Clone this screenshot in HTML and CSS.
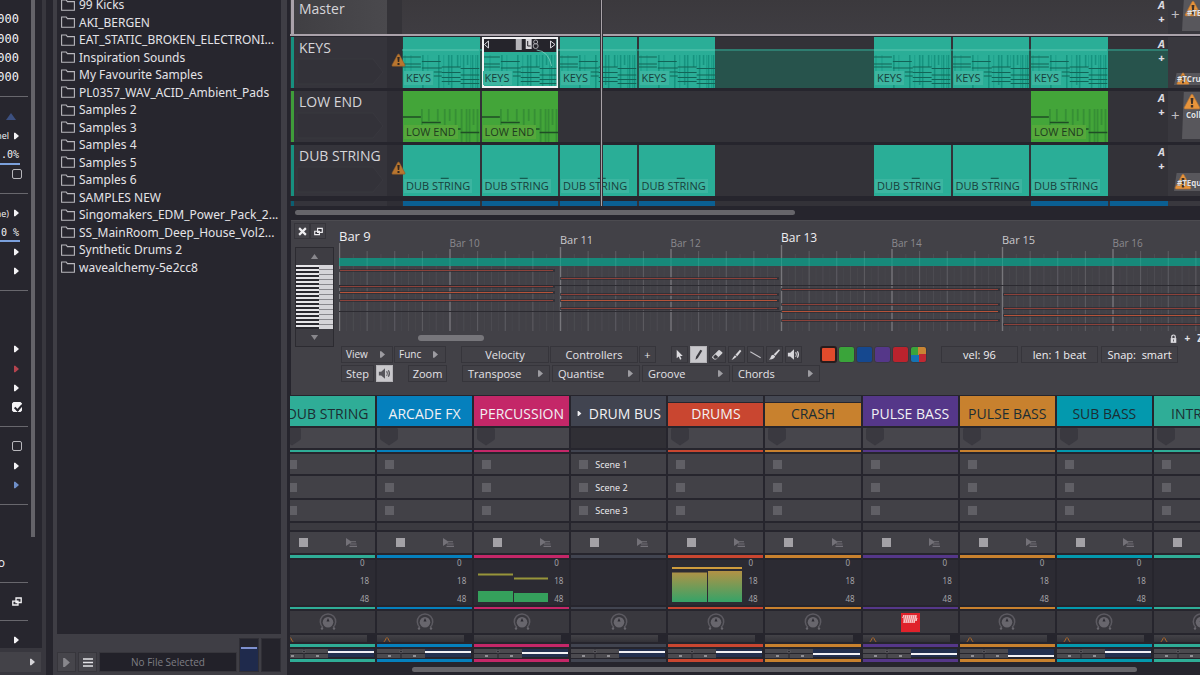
FILE: index.html
```html
<!DOCTYPE html>
<html lang="en">
<head>
<meta charset="utf-8">
<title>Studio session</title>
<link rel="stylesheet" href="styles.css">
</head>
<body>
<svg class="defs" aria-hidden="true">
  <symbol id="folder" viewBox="0 0 14 12"><path d="M.6 11.2V1h4.6l1.2 1.6h7v8.6z" fill="none" stroke="#b9b8bd" stroke-width="1.1"/></symbol>
  <symbol id="right" viewBox="0 0 6 8"><path d="M0 0h1.5L6 4 1.500 8H0z" fill="currentColor"/></symbol>
  <symbol id="up" viewBox="0 0 10 7"><path d="M5 0l5 7H0z" fill="currentColor"/></symbol>
  <symbol id="down" viewBox="0 0 10 7"><path d="M5 7l5-7H0z" fill="currentColor"/></symbol>
  <symbol id="windows" viewBox="0 0 10 9"><path d="M4 1h5.200v4.500H4zM.8 4.200H6V8H.8z" fill="#333239" stroke="currentColor" stroke-width="1.300"/></symbol>
  <symbol id="close" viewBox="0 0 8 8"><path d="M1 1l6 6M7 1L1 7" stroke="currentColor" stroke-width="1.900"/></symbol>
  <symbol id="menu" viewBox="0 0 10 9"><path d="M0 1h10M0 4.500h10M0 8h10" stroke="currentColor" stroke-width="1.600"/></symbol>
  <symbol id="warn" viewBox="0 0 15 14"><path d="M7.500 1Q8 .8 8.500 1.800L14 12q.4 1.200-.8 1.200H1.800Q.6 13.200 1 12L6.500 1.800Q7 .8 7.500 1z" fill="#b9762f" stroke="#8a5a2c" stroke-width=".6"/><path d="M6.300 4h2.400l-.5 5H6.800zM6.500 10h2v2h-2z" fill="#33271f"/></symbol>
  <symbol id="cursor" viewBox="0 0 16 16"><path d="M5 3v9l2.200-1.900L8.600 13.500l1.500-.7-1.400-3.200H11.500z" fill="#dddce0"/></symbol>
  <symbol id="pencil" viewBox="0 0 16 16"><path d="M4.800 13.500l.6-3L10 2.800l2 1.200-4.700 7.800z" fill="#3a393e"/></symbol>
  <symbol id="eraser" viewBox="0 0 16 16"><path d="M2.500 10L9 3.500q.7-.6 1.400 0l2.600 2q.7.6 0 1.300L6.500 13.200H4.400L2.300 11.400q-.5-.7.2-1.400z" fill="#d2d1d5"/><path d="M3.800 9.900L6 8l2.800 2.600-2 1.800H4.900L3.500 11z" fill="#3c3b40"/></symbol>
  <symbol id="knife" viewBox="0 0 16 16"><path d="M11.700 3l1.500 1.300L8.800 9.800 6.900 8.200zM6.300 8.800l1.900 1.600L4.600 13q-1.200.6-2 .2 1.600-.9 2-2.200z" fill="#d8d7db"/></symbol>
  <symbol id="line" viewBox="0 0 16 16"><path d="M2.500 5l11 6.500" stroke="#c4c3c8" stroke-width="1.100"/></symbol>
  <symbol id="brush" viewBox="0 0 16 16"><path d="M12.800 2.500l1 1L9 9.300 7.200 7.800zM6.700 8.200l2 1.700Q8 13.500 2 13.200q2-1 2.100-2.700.4-2.300 2.600-2.300z" fill="#d8d7db"/></symbol>
  <symbol id="speaker" viewBox="0 0 16 16"><path d="M2 6h2.500l4-3.500v11l-4-3.500H2z" fill="currentColor"/><path d="M10.300 5.500q1.600 2.500 0 5M12.200 4.500q2.200 3.500 0 7" fill="none" stroke="currentColor" stroke-width="1.200"/></symbol>
  <symbol id="lock" viewBox="0 0 8 10"><path d="M2 5V3a2 2 0 014 0v2" fill="none" stroke="#dddce0" stroke-width="1.400"/><path d="M.8 4.500h6.400V10H.8z" fill="#dddce0"/><path d="M3.500 6h1v2.500h-1z" fill="#55545a"/></symbol>
  <symbol id="queue" viewBox="0 0 11 9"><path d="M0 0l6 4-6 4zM5 3.200h5v1H5zM4 5.500h6.500v1H4zM3.500 7.800H11v1.200H3.500z" fill="#737178"/></symbol>
  <symbol id="knob" viewBox="0 0 18 18"><path d="M4 14.500A7.700 7.700 0 1114 14.500" fill="none" stroke="#5c5a61" stroke-width="1.500"/><circle cx="9" cy="9.200" r="5.300" fill="#68666d"/><path d="M9 5l1.500 3.500h-3z" fill="#2d2c33"/><circle cx="3" cy="15.500" r="1.200" fill="#68666d"/><circle cx="15" cy="15.500" r="1.200" fill="#68666d"/></symbol>
  <symbol id="shield" viewBox="0 0 18 18"><path d="M1.500 0h15q1.500 0 1.500 1.500V10q0 1.500-1.500 2.500L9 17.500 1.500 12.500Q0 11.500 0 10V1.500Q0 0 1.500 0z" fill="#3a3940"/></symbol>
  <symbol id="keysArt" viewBox="0 0 77 51" preserveAspectRatio="none">
    <path d="M0 13h77" stroke="#5cc5b1" stroke-width="1.200"/>
    <path d="M20 18v33M36 18v33M46 18v30M49 18v33M55 18v12M61 18v33M65 18v10M70 18v33M75 18v33" stroke="#16937f" stroke-width="1.600"/>
    <path d="M2 18v30M8 18v30M25 18v30M41 18v33M58 18v12M68 18v33M73 18v33" stroke="#1d9f8a" stroke-width="1"/>
    <path d="M0 20h18M0 27h18M0 30h18M19 24.500h19M19 31h20M39 30h19M58 31.500h19M31 35h8M31 39h8M39 35.500h19M39 40.500h19M39 44.500h19M58 38h19M58 42.500h19M58 46.500h19" stroke="#126457" stroke-width="1.200"/>
  </symbol>
  <symbol id="lowArt" viewBox="0 0 77 51" preserveAspectRatio="none">
    <path d="M19 18v30M26 18v12M35 18v12M42 18v30M47 18v12M53 18v16M59 18v33M64 18v33M67 18v33M71 18v16M75 18v33" stroke="#368f35" stroke-width="1.800"/>
    <path d="M0 26h18M19 31.500h19M54 38h4M58 41.500h19" stroke="#1f4d25" stroke-width="1.600"/>
  </symbol>
  <symbol id="dubArt" viewBox="0 0 77 51" preserveAspectRatio="none"><path d="M38 33.500h8" stroke="#155c51" stroke-width="1.600"/></symbol>
  <symbol id="selHead" viewBox="0 0 77 51" preserveAspectRatio="none">
    <path d="M2 2h73v13H2z" fill="#25242b"/><path d="M6.500 4L2.500 7.500l4 3.500zM69 4l4.500 3.500L69 11z" fill="none" stroke="#dcdbe0" stroke-width="1"/>
    <path d="M34 2h6v11h-6z" fill="#b5b4b9"/><path d="M44 2h6v10h-6z" fill="#d7d6da"/><path d="M46 4v5h3" stroke="#25242b" fill="none"/>
    <circle cx="54" cy="5" r="2" fill="none" stroke="#aaa9ae"/><circle cx="54" cy="9" r="2.500" fill="none" stroke="#aaa9ae"/>
    <path d="M55 13q12 1 15 16" fill="none" stroke="#7bd2c1" stroke-width=".8"/>
    <path d="M1 1h75v49H1z" fill="none" stroke="#f3f2f4" stroke-width="2"/>
  </symbol>
</svg>

<main class="app">
  <aside class="inspector" aria-label="Inspector">
    <div class="params">
      <hr><p class="num">000</p><p class="num">000</p><p class="num">000</p><p class="num">000</p><hr>
      <p class="wide blue"><svg class="tri"><use href="#up"/></svg></p>
      <p class="opt">nel<svg><use href="#right"/></svg></p>
      <p class="num value">.0%</p>
      <p class="wide"><input type="checkbox" aria-label="Enable"></p><hr>
      <p class="opt">ne)<svg><use href="#right"/></svg></p>
      <p class="num value">0 %</p>
      <p><svg><use href="#right"/></svg></p><p><svg><use href="#right"/></svg></p><hr><p></p><p></p>
      <p><svg><use href="#right"/></svg></p><p class="red"><svg><use href="#right"/></svg></p><p><svg><use href="#right"/></svg></p>
      <p class="wide"><input type="checkbox" aria-label="Loop" checked></p><hr>
      <p class="wide"><input type="checkbox" aria-label="Mute"></p>
      <p><svg><use href="#right"/></svg></p><p class="sky"><svg><use href="#right"/></svg></p><hr><p></p><p></p>
      <p class="tail">o</p><hr>
      <p class="wide"><svg class="win"><use href="#windows"/></svg></p><hr>
      <p><svg><use href="#right"/></svg></p>
    </div>
    <div class="vscroll"></div>
    <button class="expand" aria-label="Expand"><svg><use href="#right"/></svg></button>
  </aside>

  <section class="browser" aria-label="File browser">
    <ul class="files" id="files"></ul>
    <footer class="preview">
      <button aria-label="Play"><svg class="play"><use href="#right"/></svg></button>
      <button aria-label="Menu"><svg class="burger"><use href="#menu"/></svg></button>
      <output>No File Selected</output>
      <span class="level on"></span><span class="level"></span>
    </footer>
  </section>

  <section class="work">
    <div class="arranger" id="arranger"></div>
    <div class="hscroll top"><span></span></div>

    <section class="editor" aria-label="Note editor">
      <div class="side">
        <div class="pair"><button aria-label="Close"><svg><use href="#close"/></svg></button><button aria-label="Detach"><svg><use href="#windows"/></svg></button></div>
        <div class="keyboard">
          <button aria-label="Octave up"><svg><use href="#up"/></svg></button>
          <div class="keybed"></div>
          <button aria-label="Octave down"><svg><use href="#down"/></svg></button>
        </div>
      </div>
      <div class="stage">
        <div class="roll"><svg id="grid" viewBox="0 0 884 88" preserveAspectRatio="none"></svg><div class="bars" id="bars"></div></div>
        <div class="strip"><span class="handle"></span><span class="zoomers"><svg><use href="#lock"/></svg><b>+</b><b>Z</b></span></div>
        <div class="tools">
          <div class="group first"><button class="drop">View<svg><use href="#right"/></svg></button><button class="drop">Func<svg><use href="#right"/></svg></button></div>
          <div class="group mid"><button class="w88">Velocity</button><button class="w88">Controllers</button><button class="tiny">+</button></div>
          <div class="group icons">
            <button aria-label="Select"><svg><use href="#cursor"/></svg></button><button class="on" aria-label="Pencil"><svg><use href="#pencil"/></svg></button><button aria-label="Erase"><svg><use href="#eraser"/></svg></button><button aria-label="Knife"><svg><use href="#knife"/></svg></button><button aria-label="Line"><svg><use href="#line"/></svg></button><button aria-label="Brush"><svg><use href="#brush"/></svg></button><button aria-label="Audition"><svg><use href="#speaker"/></svg></button>
          </div>
          <div class="swatches"><button class="c1 on" aria-label="Orange"></button><button class="c2" aria-label="Green"></button><button class="c3" aria-label="Blue"></button><button class="c4" aria-label="Purple"></button><button class="c5" aria-label="Red"></button><button class="c6" aria-label="Multi"></button></div>
          <div class="group fields"><button>vel: 96</button><button>len: 1 beat</button><button>Snap:&nbsp; smart</button></div>
        </div>
        <div class="tools">
          <div class="group second"><button class="step">Step</button><button class="lit" aria-label="Sound"><svg><use href="#speaker"/></svg></button><button class="zoom">Zoom</button></div>
          <div class="group menus"><button class="drop">Transpose<svg><use href="#right"/></svg></button><button class="drop">Quantise<svg><use href="#right"/></svg></button><button class="drop">Groove<svg><use href="#right"/></svg></button><button class="drop">Chords<svg><use href="#right"/></svg></button></div>
        </div>
      </div>
    </section>

    <div class="mixer" id="mixer"></div>
    <div class="hscroll bottom"><span></span></div>
  </section>
</main>
<script src="app.js"></script>
</body>
</html>
```

FILE: styles.css
```css
* { box-sizing: border-box; }
body { margin: 0; background: #26252d; color: #e4e3e7; font: 13px/17px "Open Sans", "Noto Sans", sans-serif; overflow: hidden; }
button { font: inherit; color: inherit; margin: 0; padding: 0; border: 0; background: none; display: flex; align-items: center; justify-content: center; white-space: nowrap; }
p, ul { margin: 0; padding: 0; list-style: none; }
.defs { display: none; }
.app { display: grid; grid-template-columns: 46px 7px 234px 3px minmax(0, 1fr); height: 100vh; }

/* Inspector */
.inspector { grid-column: 1; display: grid; grid-template: minmax(0, 1fr) 20px / minmax(0, 1fr) 4px; row-gap: 4px; border-right: 4px solid #38373e; border-bottom: 3px solid #38373e; padding-right: 7px; overflow: hidden; background: linear-gradient(#27262e, #27262e) no-repeat 0 0 / 100% calc(100% - 24px), #38373e; }
.params { display: grid; grid-auto-rows: minmax(0, 1fr); margin: -10px 0 -2px; min-height: 0; }
.params p { display: flex; align-items: center; justify-content: flex-end; padding-right: 12px; gap: 5px; min-width: 0; white-space: nowrap; overflow: hidden; color: #f3f2f5; }
.params hr { width: 28px; height: 1px; margin: 0; border: 0; background: #68676d; align-self: center; }
.params svg { width: 5px; height: 8px; flex: none; }
.params .num { font: 12px/18px "DejaVu Sans Mono", monospace; }
.params .value { font-size: 10px; background: linear-gradient(#7ba0dc, #7ba0dc) no-repeat 0 100% / 20px 2px; }
.params .opt { font-size: 9px; }
.params .wide { padding-right: 9px; }
.params .tail { padding-right: 26px; font-size: 12px; }
.params .tri { width: 10px; height: 7px; margin-right: 6px; }
.params .win { width: 10px; height: 9px; }
.params .blue { color: #3c5080; }
.params .red { color: #b5444f; }
.params .sky { color: #6f8fc8; }
input[type="checkbox"] { appearance: none; width: 10px; height: 10px; margin: 0; border: 1px solid #b8b7bc; border-radius: 2px; flex: none; }
input[type="checkbox"]:checked { background: #f4f3f6; border-color: #f4f3f6; position: relative; }
input:checked::after { content: ""; position: absolute; left: 3px; top: 0; width: 3px; height: 6px; border: solid #27262e; border-width: 0 2px 2px 0; transform: rotate(42deg); }
.vscroll { background: #646369; margin-bottom: 111px; }
.expand { grid-column: 1 / 3; margin-right: -6px; background: #434248; justify-content: flex-end; padding-right: 6px; color: #d5d4d8; }
.expand svg { width: 5px; height: 8px; }

/* Browser */
.browser { grid-column: 3; display: flex; flex-direction: column; border: solid #3f3e45; border-width: 0 6px 3px 4px; background: #27262e; min-height: 0; }
.files { display: grid; grid-auto-rows: 1fr; height: 280px; margin-top: -4px; font-family: "Noto Sans", sans-serif; font-size: 12px; }
.files li { display: flex; align-items: center; gap: 4px; padding-left: 4px; white-space: nowrap; min-width: 0; }
.files svg { width: 14px; height: 12px; flex: none; }
.files a { color: inherit; text-decoration: none; }
.preview { margin-top: auto; display: grid; grid-template-columns: 19px 19px minmax(0, 1fr) 20px 20px; gap: 2px; align-items: end; height: 38px; padding-top: 4px; background: #3f3e45; }
.preview button, .preview output { height: 20px; border: 1px solid #37363c; background: #46454b; }
.preview output { background: #222129; color: #7f7e84; font-size: 10px; line-height: 18px; text-align: center; }
.play { width: 7px; height: 9px; color: #88878c; }
.burger { width: 10px; height: 9px; }
.level { height: 34px; background: #24232b; border: 1px solid #302f36; }
.level.on { background: linear-gradient(#7e90cf, #7e90cf) no-repeat 1px 8px / 16px 2px, linear-gradient(#24242e 8px, #1f2a4c 8px); }

/* Arranger */
.work { grid-column: 5; display: flex; flex-direction: column; min-width: 0; }
.arranger { position: relative; display: grid; grid-template-rows: 34px 51px 51px 51px 7px; row-gap: 3px; overflow: hidden; }
.track { display: grid; grid-template-columns: 97px 15px minmax(0, 1fr) 32px; min-width: 0; background: #333238; }
.track:first-child { box-shadow: 0 2px #aaa2aa; background: linear-gradient(#3b393d, #3f3d42); }
.track.peek { margin-top: 2px; }
.head { position: relative; border-left: 3px solid; margin-left: 1px; padding: 2px 5px; background: #35343b; font-size: 14px; color: #d6d5d9; overflow: hidden; }
.head svg { position: absolute; left: 2px; top: 21px; width: 88px; height: 27px; }
.head span { position: relative; }
.track:first-child .head { background: linear-gradient(90deg, #403f43, #4a494d); padding-top: 0; }
.gutter { background: #2f2e35; display: flex; align-items: center; }
.gutter svg { width: 15px; height: 14px; margin: 0 0 6px 4px; overflow: visible; flex: none; z-index: 1; }
.track:first-child .gutter { background: #343338; }
.lane { position: relative; overflow: hidden; min-width: 0; }
.lane.auto { background: linear-gradient(transparent 12px, #2e7d70 12px, #2e7d70 14px, #27534c 14px); }
.clips { display: grid; grid-template-columns: repeat(10, minmax(0, 1fr)); column-gap: 2px; margin: 0 -18px 0 1px; height: 100%; }
.clip { position: relative; display: flex; align-items: flex-end; padding: 0 0 3px 1px; background: #2aae97; }
.clip svg { position: absolute; inset: 0; width: 100%; height: 100%; }
.clip span { position: relative; padding: 0 2px; font-size: 11px; line-height: 14px; background: #3cb5a0; color: #173f3b; white-space: nowrap; }
.clip.low { background: #43a539; }
.clip.low span { background: #55a83b; color: #1f3c20; }
.clip.next { background: #0b5f92; }
.add { position: absolute; right: 0; top: 0; width: 13px; text-align: center; font-size: 11px; line-height: 14px; font-weight: bold; color: #dcdbe0; }
.add i, .add b { display: block; }
.track:first-child .add { margin-top: -2px; }
.fx { position: relative; background: #39383e; overflow: hidden; font-weight: bold; font-size: 8px; white-space: nowrap; }
.fx > i { position: absolute; left: 3px; font: 15px/16px "Noto Sans", sans-serif; color: #bdbcc1; }
.fx .plate { position: absolute; left: 14px; right: 0; background: #58575c; clip-path: polygon(10% 0, 100% 0, 100% 100%, 0 100%); }
.fx .plate.flat { left: 6px; }
.fx svg { position: absolute; width: 18px; height: 17px; filter: brightness(1.250); }
.fx span { position: absolute; line-height: 12px; text-shadow: 0 0 1px #333; }
.playhead { position: absolute; left: 310px; top: 0; bottom: 0; width: 3px; background: #a9a3a8; border: solid #333137; border-width: 0 1px; z-index: 2; }
.hscroll { padding: 0 5px; }
.hscroll span { display: block; height: 5px; border-radius: 3px; background: #66656a; }
.hscroll.top { padding-top: 4px; height: 14px; }
.hscroll.top span { width: 55.6%; }
.hscroll.bottom { padding: 5px 63px 0 122px; }

/* Note editor */
.editor { display: grid; grid-template-columns: 48px minmax(0, 1fr); height: 175px; margin-left: 1px; background: #424147; border-top: 1px solid #4c4b50; }
.side { padding: 2px 5px 0 3px; }
.pair { display: flex; }
.pair button { width: 16px; height: 16px; border: 1px solid #36353b; }
.pair svg { width: 9px; height: 9px; color: #eeedf0; }
.keyboard { margin: 8px 0 0 1px; border: 1px solid #2c2b31; height: 100px; display: flex; flex-direction: column; }
.keyboard button { height: 17px; width: 100%; color: #88878c; background: #3e3d43; }
.keyboard svg { width: 9px; height: 5px; }
.keybed { flex: 1; background: repeating-linear-gradient(#e6e5e8 0 2px, #29282e 2px 4px); position: relative; }
.keybed::after { content: ""; position: absolute; inset: 0 0 0 62%; background: repeating-linear-gradient(#d5d4d8 0 4px, #89888d 4px 5px); }
.stage { min-width: 0; display: flex; flex-direction: column; overflow: hidden; }
.roll { display: grid; height: 110px; margin-right: -23px; }
.roll > * { grid-area: 1 / 1; }
.roll svg { width: 100%; height: 88px; align-self: end; }
.bars { display: grid; grid-template-columns: repeat(8, 1fr); align-items: start; }
.bars span { font-size: 10px; line-height: 14px; padding-top: 15px; color: #8a898e; }
.bars .half { font-size: 11px; padding-top: 12px; color: #c9c8cc; }
.bars .major { font-size: 12px; padding-top: 10px; color: #f0eff2; }
.bars .major:first-child { font-size: 13px; padding-top: 8px; }
.strip { display: flex; justify-content: space-between; height: 15px; align-items: flex-start; padding: 4px 0 0 79px; }
.handle { width: 66px; height: 6px; border-radius: 3px; background: #77767b; }
.zoomers { display: flex; align-items: center; gap: 7px; font-size: 10px; line-height: 10px; margin: -2px -3px 0 0; }
.zoomers svg { width: 7px; height: 9px; }
.tools { display: flex; height: 17px; margin: 0 0 2px 2px; font-size: 11px; }
.group { display: flex; gap: 1px; }
.group button { height: 17px; border: 1px solid #36353b; background: #424147; }
.drop { gap: 4px; }
.drop svg { width: 5px; height: 7px; color: #9d9ca1; }
.first .drop { width: 52px; justify-content: space-between; padding: 0 7px 0 4px; font-size: 10px; }
.mid { margin-left: 15px; }
.w88 { width: 88px; }
.tiny { width: 17px; }
.icons { margin-left: 15px; gap: 2px; }
.icons button, .lit { width: 17px; }
.icons svg, .lit svg { width: 15px; height: 15px; flex: none; color: #d8d7db; }
.icons .on, .group .lit { background: #c9c8cc; border-color: #b5b4b8; }
.group .lit svg { color: #55545a; }
.swatches { display: flex; gap: 1px; margin-left: 18px; }
.swatches button { width: 17px; height: 17px; border-radius: 3px; border: 1px solid #3a393f; }
.swatches .c1 { background: #e14b2c; border: 2px solid #271c1d; }
.swatches .c2 { background: #3aa43a; }
.swatches .c3 { background: #15488f; }
.swatches .c4 { background: #553789; }
.swatches .c5 { background: #bb232d; }
.swatches .c6 { background: conic-gradient(#c98534 25%, #c12832 0 50%, #1573b3 0 75%, #3aa43a 0); }
.fields { margin-left: 14px; gap: 3px; }
.fields button { width: 77px; color: #f0eff2; }
.step { width: 33px; }
.second { gap: 2px; }
.zoom { width: 39px; margin-left: 13px; }
.menus { gap: 2px; margin-left: 15px; }
.menus .drop { width: 88px; justify-content: space-between; padding: 0 6px 0 5px; }

/* Mixer */
.mixer { display: grid; grid-template-columns: repeat(10, minmax(0, 1fr)); column-gap: 2px; margin: 1px -49px 0 -10px; clip-path: inset(0 0 0 10px); }
.strip-col { --c: #2fad97; display: grid; grid-template-rows: 30px 20px 2px 20px 22px 21px 7px 21px 3px 45px 2px 22px 7px 3px 8px 3px; row-gap: 2px; min-width: 0; }
.strip-col > * { min-width: 0; }
.name { margin: 0; background: var(--c); color: #1c2d33; font-weight: normal; font-size: 14px; line-height: 35px; text-align: center; white-space: nowrap; position: relative; }
.name.light { color: #f2f1f4; }
.name.child { box-shadow: inset 0 6px #454853, inset 0 7px #27262e; }
.name svg { position: absolute; left: 6px; top: 15px; width: 5px; height: 5px; }
.name.bus { padding-left: 12px; }
.bar { background: var(--c); }
.slot { background: #47464c; padding-left: 3px; }
.slot svg { width: 18px; height: 18px; display: block; }
.scene { background: #424147; justify-content: flex-start; gap: 7px; padding-left: 8px; font-size: 9px; font-weight: 500; color: #f0eff2; width: 100%; }
.scene::before { content: ""; width: 9px; height: 9px; background: #605f65; }
.cut { background: #3b3a40; }
.stop { display: flex; align-items: center; background: #424147; padding: 0 19px; justify-content: space-between; }
.stop i { width: 9px; height: 9px; background: #a3a1a6; }
.stop svg { width: 11px; height: 9px; margin-right: -1px; }
.meter { display: grid; grid-template-columns: 76px 1fr; background: #2c2b33; }
.meter svg { width: 70px; height: 45px; margin-left: 4px; }
.scale { display: flex; flex-direction: column; justify-content: space-between; padding-left: 4px; margin: -3px 0 1px; font: 8px/11px "Noto Sans", sans-serif; color: #a3a2a7; }
.pan { display: flex; justify-content: center; align-items: center; background: #39383e; }
.pan svg { width: 18px; height: 18px; }
.pan .synth { width: 19px; height: 19px; }
.mini { background: linear-gradient(#434247, #333238); margin-right: 8px; padding-left: 6px; display: flex; }
.mini svg { width: 8px; height: 6px; margin-top: 1px; }
.fader { display: grid; grid-template-columns: 48px 1fr; background: #27262e; }
.fader svg { width: 48px; height: 9px; }
.fader i { height: 8px; margin-right: 1px; background: linear-gradient(#f2f1f5, #f2f1f5) no-repeat 0 var(--p) / 100% 2px, #23304f; }
.is-bus .slot { background: #302f35; }
```

FILE: app.js
```js
const byId = (id) => document.getElementById(id);
const icon = (name) => `<svg aria-hidden="true"><use href="#${name}"/></svg>`;

byId('files').innerHTML = [
  '99 Kicks', 'AKI_BERGEN', 'EAT_STATIC_BROKEN_ELECTRONI...', 'Inspiration Sounds',
  'My Favourite Samples', 'PL0357_WAV_ACID_Ambient_Pads', 'Samples 2', 'Samples 3',
  'Samples 4', 'Samples 5', 'Samples 6', 'SAMPLES NEW', 'Singomakers_EDM_Power_Pack_2...',
  'SS_MainRoom_Deep_House_Vol2...', 'Synthetic Drums 2', 'wavealchemy-5e2cc8',
].map((name) => `<li>${icon('folder')}<a href="#">${name}</a></li>`).join('');

// Arranger tracks: clips are given by their column on the timeline.
const plate = (style, cls = '') => `<div class="plate ${cls}" style="${style}"></div>`;
const tracks = [
  { name: 'Master', color: '#aaa2aa', clips: [],
    fx: `<i style="top:6px">+</i>${plate('top:0;height:31px')}<svg style="left:16px;top:0"><use href="#warn"/></svg><span style="left:19px;top:7px">#TE</span>` },
  { name: 'KEYS', color: '#17907f', kind: 'keys', clips: [1, 2, 3, 4, 7, 8, 9], auto: true, warn: true,
    fx: `${plate('top:36px;height:12px', 'flat')}<svg style="left:8px;top:33px;width:14px"><use href="#warn"/></svg><span style="left:9px;top:36px">#TCru</span>` },
  { name: 'LOW END', color: '#3f9c3a', kind: 'low', clips: [1, 2, 9],
    fx: `<i style="top:16px">+</i>${plate('top:1px;height:47px')}<svg style="left:15px;top:2px"><use href="#warn"/></svg><span style="left:18px;top:18px">Coll</span>` },
  { name: 'DUB STRING', color: '#17907f', kind: 'dub', clips: [1, 2, 3, 4, 7, 8, 9], warn: true,
    fx: `${plate('top:28px;height:18px', 'flat')}<svg style="left:6px;top:28px"><use href="#warn"/></svg><span style="left:9px;top:32px">#TEqu</span>` },
  { name: '', color: '#0b5f72', kind: 'next', clips: [1, 2, 3, 4, 9, 10], fx: '' },
];
byId('arranger').innerHTML = tracks.map((t) => {
  const clips = t.clips.map((col) => {
    const sel = t.kind === 'keys' && col === 2;
    const art = t.name ? icon(`${t.kind}Art`) + (sel ? icon('selHead') : '') + `<span>${t.name}</span>` : '';
    return `<div class="clip ${t.kind}" style="grid-column:${col}">${art}</div>`;
  }).join('');
  const shape = t.kind && t.name ? '<svg viewBox="0 0 88 27"><path d="M1 1h76l10 13-10 12H1z" fill="#333239" stroke="#39383f"/></svg>' : '';
  return `<div class="track${t.name ? '' : ' peek'}">
    <div class="head" style="border-color:${t.color}">${shape}<span>${t.name}</span></div>
    <div class="gutter">${t.warn ? icon('warn') : ''}</div>
    <div class="lane${t.auto ? ' auto' : ''}"><div class="clips">${clips}</div>${t.name ? '<div class="add"><i>A</i><b>+</b></div>' : ''}</div>
    <div class="fx">${t.fx}</div></div>`;
}).join('') + '<div class="playhead"></div>';

// Piano roll: beat grid, clip band and notes.
const BAR = 110.5;
let g = '';
for (let i = 0; i < 128; i++) {
  const x = i * BAR / 16 + 0.5;
  const major = i % 16 === 0, beat = i % 4 === 0, half = i % 2 === 0;
  const color = major ? '#77767b' : beat ? '#5f5e64' : half ? '#4d4c52' : '#47464c';
  const top = i === 0 ? 0 : i === 64 ? 2 : i % 32 === 0 ? 4 : major ? 6 : beat ? 8 : half ? 11 : 25;
  g += `<path d="M${x} ${top}V88" stroke="${color}" stroke-width="${major ? 1.4 : 1}"/>`;
}
g += '<path d="M0 15h884v8H0z" fill="#17897a"/>';
for (let i = 0; i < 32; i++) g += `<path d="M${i * BAR / 4 + 0.5} 15v8" stroke="#2b9a8a"/>`;
g += '<path d="M0 42.500h884M0 68.500h442" stroke="#2b2a30"/>';
[[0, 216, [28, 44, 50, 58]], [221, 219, [36, 52, 58, 66]], [442, 219, [47, 62, 69, 78]], [664, 220, [52, 66, 73, 82]]]
  .forEach(([x, w, ys]) => ys.forEach((y, n) => {
    g += `<rect x="${x}" y="${y - 2}" width="${w}" height="3" fill="#2c2b31" opacity=".7"/>`
      + `<rect x="${x + 1}" y="${y - 1}" width="${w - 3}" height="1" fill="${n === 2 ? '#b5533a' : '#8c423b'}"/>`;
  }));
byId('grid').innerHTML = g;
byId('bars').innerHTML = [9, 10, 11, 12, 13, 14, 15, 16]
  .map((n) => `<span class="${n % 4 === 1 ? 'major' : n % 2 ? 'half' : ''}">Bar ${n}</span>`).join('');

// Mixer channels.
const fills = {
  perc: '<path d="M0 14.500h35M36 18.500h34" stroke="#97953a" stroke-width="2"/><path d="M0 31h35v11H0zM36 33h34v9H36z" fill="#35a05c"/>',
  drums: '<path d="M0 8h70" stroke="#cf9c3d" stroke-width="2"/><defs><linearGradient id="lv" x2="0" y2="1"><stop stop-color="#b39245"/><stop offset="1" stop-color="#35a368"/></linearGradient></defs><path d="M0 12.500h35V42H0zM36 11h34v31H36z" fill="url(#lv)"/>',
};
const channels = [
  { name: 'DUB STRING', color: '#2fad97', pos: 2, warn: true },
  { name: 'ARCADE FX', color: '#0580bd', light: true, pos: 2, warn: true },
  { name: 'PERCUSSION', color: '#c42768', light: true, pos: 3, fill: 'perc' },
  { name: 'DRUM BUS', color: '#414450', light: true, pos: 2, bus: true },
  { name: 'DRUMS', color: '#c94630', light: true, pos: 2, fill: 'drums', child: true },
  { name: 'CRASH', color: '#c8812e', pos: 4, child: true },
  { name: 'PULSE BASS', color: '#553789', light: true, pos: 4, warn: true, synth: true },
  { name: 'PULSE BASS', color: '#c8812e', pos: 6, warn: true },
  { name: 'SUB BASS', color: '#0399ae', pos: 2, warn: true },
  { name: 'INTRO FX', color: '#2fad97', pos: 2, warn: true },
];
const synthIcon = '<svg class="synth" viewBox="0 0 19 19"><path d="M0 0h19v19H0z" fill="#e0222b"/><path d="M1.500 5l1.500-3v8l2-8v8l2-8v8l2-8v8l2-8v8l2-8v8l2-8v6l1-3" fill="none" stroke="#fbdcdc" stroke-width=".9"/></svg>';
const faderBase = '<svg viewBox="0 0 48 9"><path d="M0 0h48v9H0z" fill="#4b4a4f"/><path d="M0 4.500h48M24 0v9" stroke="#26252c"/><circle cx="24" cy="2.500" r="1.400" fill="#2a292f" stroke="#77767b" stroke-width=".6"/><path d="M11 7h3M36 7h3" stroke="#aaa9ae" stroke-width="1.300"/></svg>';
const peak = '<svg viewBox="0 0 8 6"><path d="M.5 6Q2.500 5 3 2.500q1-2 2 0Q5.500 5 7.500 6" fill="none" stroke="#b06b2c"/></svg>';
byId('mixer').innerHTML = channels.map((c) => `
  <section class="strip-col${c.bus ? ' is-bus' : ''}" style="--c:${c.color}">
    <h2 class="name${c.light ? ' light' : ''}${c.child ? ' child' : ''}${c.bus ? ' bus' : ''}">${c.bus ? icon('right') : ''}${c.name}</h2>
    <div class="slot">${c.bus ? '' : icon('shield')}</div>
    <div class="bar"></div>
    ${[1, 2, 3].map((n) => `<button class="scene" aria-label="Scene ${n}">${c.bus ? `Scene ${n}` : ''}</button>`).join('')}
    <div class="cut"></div>
    <div class="stop"><i></i>${icon('queue')}</div>
    <div class="bar"></div>
    <div class="meter"><svg viewBox="0 0 70 45">${fills[c.fill] || ''}</svg>${c.bus ? '' : '<div class="scale"><span>0</span><span>18</span><span>48</span></div>'}</div>
    <div class="bar"></div>
    <div class="pan">${c.synth ? synthIcon : icon('knob')}</div>
    <div class="mini">${c.warn ? peak : ''}</div>
    <div class="bar"></div>
    <div class="fader">${faderBase}<i style="--p:${c.pos}px"></i></div>
    <div class="bar"></div>
  </section>`).join('');
```
